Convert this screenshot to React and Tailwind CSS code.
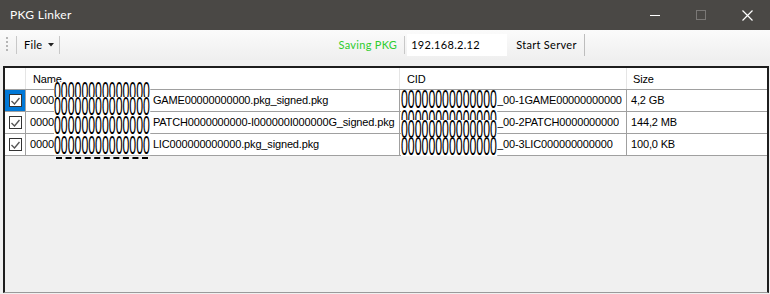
import React from 'react';

const Z = '00000000000000';

const rows = [
  {
    pre: '0000',
    nameRedact: { lines: [-8, 7] },
    name: 'GAME00000000000.pkg_signed.pkg',
    cidRedact: { lines: [0] },
    cid: '_00-1GAME00000000000',
    size: '4,2 GB',
    selected: true,
  },
  {
    pre: '0000',
    nameRedact: { lines: [4] },
    name: 'PATCH0000000000-I000000I000000G_signed.pkg',
    cidRedact: { lines: [-2, 8] },
    cid: '_00-2PATCH0000000000',
    size: '144,2 MB',
  },
  {
    pre: '0000',
    nameRedact: { lines: [2], dashed: true },
    name: 'LIC000000000000.pkg_signed.pkg',
    cidRedact: { lines: [3] },
    cid: '_00-3LIC000000000000',
    size: '100,0 KB',
  },
];

function Redact({ lines, dashed }) {
  const last = lines[lines.length - 1];
  return (
    <span className="relative block w-[96px] h-[21px] shrink-0">
      {lines.map((t, i) => (
        <span
          key={i}
          className="absolute left-0 w-[125px] h-[12px] bg-white overflow-visible origin-top-left scale-x-[0.77] scale-y-[1.6] font-['Liberation_Sans',Arial,sans-serif] text-[16px] leading-[12px] tracking-normal text-black"
          style={{ top: t }}
        >
          {Z}
        </span>
      ))}
      {dashed && (
        <span
          className="absolute left-[2px] w-[92px] border-t-2 border-dashed border-black"
          style={{ top: last + 21 }}
        />
      )}
    </span>
  );
}

function Check() {
  return (
    <span className="w-[13px] h-[13px] bg-white border border-[#333] flex items-center justify-center">
      <svg width="9" height="8" viewBox="0 0 9 8">
        <path d="M0.5 4 L3.5 7 L8.5 1" fill="none" stroke="#555" strokeWidth="1.4" />
      </svg>
    </span>
  );
}

export default function App() {
  return (
    <div className="w-[770px] h-[294px] bg-[#f0f0f0] flex flex-col overflow-hidden font-['Liberation_Sans',Arial,sans-serif]">
      {/* title bar */}
      <div className="h-[30px] bg-[#4a4845] flex items-center shrink-0">
        <span className="pl-[10px] text-white text-[12px] font-['Lato',sans-serif] tracking-[0.3px]">PKG Linker</span>
        <div className="ml-auto flex items-center h-full">
          <div className="w-[46px] h-full flex items-center justify-center">
            <span className="w-[10px] h-px bg-white" />
          </div>
          <div className="w-[46px] h-full flex items-center justify-center">
            <span className="w-[10px] h-[10px] border border-[#7a7876]" />
          </div>
          <div className="w-[46px] h-full flex items-center justify-center">
            <svg width="11" height="11" viewBox="0 0 11 11">
              <path d="M0.5 0.5 L10.5 10.5 M10.5 0.5 L0.5 10.5" stroke="#fff" strokeWidth="1.2" />
            </svg>
          </div>
        </div>
      </div>

      {/* toolbar */}
      <div className="h-[30px] shrink-0 bg-gradient-to-b from-[#fbfbfb] to-[#efefef] flex items-center text-[11px] font-['Lato',sans-serif] tracking-[0.3px]">
        <span className="ml-[6px] w-[2px] h-[16px] bg-[repeating-linear-gradient(to_bottom,#b5b5b5_0_2px,transparent_2px_4px)]" />
        <span className="ml-[8px] w-px h-[18px] bg-[#c8c8c8]" />
        <span className="ml-[7px] text-black">File</span>
        <svg className="ml-[6px]" width="6" height="4" viewBox="0 0 6 4">
          <path d="M0 0 H6 L3 3.5 Z" fill="#222" />
        </svg>
        <span className="ml-[5px] w-px h-[18px] bg-[#c8c8c8]" />
        <span className="ml-[278px] text-[#2ecc2e]">Saving PKG</span>
        <span className="ml-[7px] w-px h-[18px] bg-[#c8c8c8]" />
        <div className="ml-[2px] w-[100px] h-[22px] bg-white flex items-center pl-[4px] text-black">192.168.2.12</div>
        <div className="ml-[3px] h-[22px] pl-[6px] pr-[7px] flex items-center border-r border-[#bdbdbd] text-black">Start Server</div>
      </div>

      {/* list view */}
      <div className="mt-[6px] ml-[3px] mr-px mb-px flex-1 border-t-2 border-l-2 border-r-2 border-b border-t-[#1e1e1e] border-l-[#1e1e1e] border-r-[#1e1e1e] border-b-[#9a9a9a] bg-[#f0f0f0] text-[11px] tracking-[-0.15px] text-black">
        <div className="flex h-[21px] bg-white">
          <div className="w-[21px] border-r border-[#e5e5e5]" />
          <div className="w-[374px] border-r border-[#e5e5e5] pl-[7px] pt-[3px]">Name</div>
          <div className="w-[227px] border-r border-[#e5e5e5] pl-[7px] pt-[3px]">CID</div>
          <div className="flex-1 pl-[6px] pt-[3px]">Size</div>
        </div>
        {rows.map((r, i) => (
          <div key={i} className="flex h-[22px] bg-white border-t border-[#a0a0a0]">
            <div className={`w-[21px] border-r border-[#a0a0a0] flex items-center justify-center ${r.selected ? 'bg-[#0078d7]' : ''}`}>
              <Check />
            </div>
            <div className="w-[374px] border-r border-[#a0a0a0] pl-[4px] flex items-center whitespace-nowrap">
              <span>{r.pre}</span>
              <Redact {...r.nameRedact} />
              <span className="ml-[3px] min-w-0 overflow-hidden pr-[2px]">{r.name}</span>
            </div>
            <div className="w-[227px] border-r border-[#a0a0a0] pl-px flex items-center whitespace-nowrap">
              <Redact {...r.cidRedact} />
              <span className="min-w-0 overflow-hidden">{r.cid}</span>
            </div>
            <div className="flex-1 pl-[4px] flex items-center">{r.size}</div>
          </div>
        ))}
        <div className="border-t border-[#a0a0a0]" />
      </div>
    </div>
  );
}
